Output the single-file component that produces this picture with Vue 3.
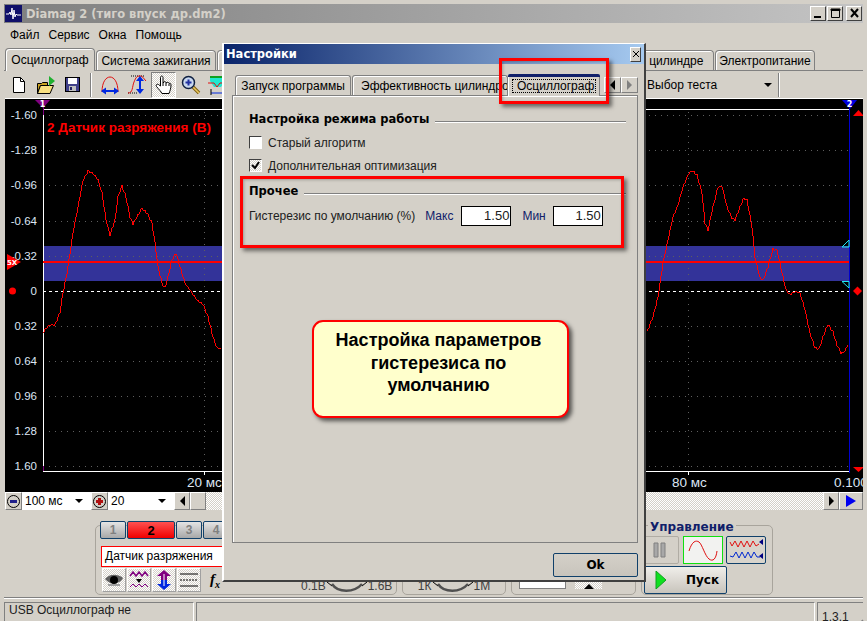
<script setup>
const menus = ['Файл', 'Сервис', 'Окна', 'Помощь']

// опорные точки кривой, снятые с экрана
const leftRaw = [[43,332],[47,327],[50,325],[55,325],[60,312],[63,293],[67,273],[70,253],[73,233],[78,207],[83,180],[88,171],[93,173],[98,180],[102,193],[106,220],[110,235],[115,220],[118,197],[122,186],[126,197],[130,217],[133,224],[137,217],[142,208],[147,213],[152,223],[155,243],[158,267],[162,283],[165,288],[168,277],[172,260],[176,253],[180,267],[185,283],[192,293],[197,300],[203,304],[208,317],[213,337],[217,348],[222,349]]
const rightRaw = [[647,332],[653,317],[658,297],[663,263],[668,240],[673,217],[678,205],[683,187],[688,175],[692,170],[697,175],[702,193],[705,223],[708,230],[713,207],[718,187],[722,186],[727,207],[732,218],[735,220],[740,207],[744,198],[747,200],[752,227],[755,257],[760,278],[763,280],[768,267],[773,249],[777,250],[782,273],[786,290],[790,295],[795,291],[800,293],[805,310],[810,333],[815,348],[819,349],[823,337],[828,324],[833,332],[837,345],[841,353],[845,351],[849,342]]

function trace(raw) {
  const out = []
  for (let i = 0; i < raw.length - 1; i++) {
    const [x1, y1] = raw[i]
    const [x2, y2] = raw[i + 1]
    for (let x = x1; x < x2; x++) {
      const y = y1 + (y2 - y1) * (x - x1) / (x2 - x1)
      out.push(x + ',' + Math.round(y + Math.sin(x * 1.9) * 0.9))
    }
  }
  return out.join(' ')
}
const leftWave = trace(leftRaw)
const rightWave = trace(rightRaw)

const scaleY = [
  { t: '-1.60', y: 115 }, { t: '-1.28', y: 150 }, { t: '-0.96', y: 185 }, { t: '-0.64', y: 221 },
  { t: '-0.32', y: 256 }, { t: '0', y: 291 }, { t: '0.32', y: 326 }, { t: '0.64', y: 361 },
  { t: '0.96', y: 396 }, { t: '1.28', y: 431 }, { t: '1.60', y: 466 }
]
const gridX = [204, 365, 526, 688]
</script>

<template>
  <div class="window">
    <div class="titlebar">
      <svg class="app-icon" width="17" height="17" viewBox="0 0 17 17">
        <rect width="17" height="17" fill="#10106a" />
        <path d="M1 9h3l1-2 1 3 1-7 1 11 1-9 1 7 1-3 1 1h4" fill="none" stroke="#fff" />
      </svg>
      <span class="title-text">Diamag 2 (тиго впуск др.dm2)</span>
      <div class="win-btns">
        <button class="win-btn"><svg width="15" height="15"><rect x="3" y="10" width="7" height="2" fill="#000" /></svg></button>
        <button class="win-btn"><svg width="15" height="15"><path d="M3.5 3.5h8v8h-8z M3 3h9v1.500H3z" fill="none" stroke="#000" /></svg></button>
        <button class="win-btn close"><svg width="15" height="15"><path d="M4 3l7 8M11 3l-7 8" stroke="#000" stroke-width="2" /></svg></button>
      </div>
    </div>

    <div class="menubar">
      <span v-for="m in menus" :key="m">{{ m }}</span>
    </div>

    <div class="tabs">
      <div class="tab active">Осциллограф</div>
      <div class="tab t-ign">Система зажигания</div>
      <div class="tab t-hid"></div>
      <div class="tab t-cyl">Давление в цилиндре</div>
      <div class="tab t-pow">Электропитание</div>
    </div>

    <div class="toolbar">
      <div class="tool">
        <svg width="14" height="16" viewBox="0 0 14 16"><path d="M1.500.5h7l4 4v11h-11z" fill="#fff" stroke="#000" /><path d="M8.500.5v4h4" fill="none" stroke="#000" /></svg>
      </div>
      <div class="tool">
        <svg width="20" height="20" viewBox="0 0 20 20">
          <path d="M1.500 8.500h4l1-1h5v3h-7l-3 8z" fill="#c8a020" stroke="#000" />
          <path d="M4.500 10.500h13l-3.500 8H1.500z" fill="#f8e080" stroke="#000" />
          <path d="M13 1l6 5-6 5z" fill="#20b030" />
        </svg>
      </div>
      <div class="tool">
        <svg width="15" height="15" viewBox="0 0 15 15">
          <rect x=".5" y=".5" width="14" height="14" fill="#40408a" stroke="#000" />
          <rect x="3" y="1" width="9" height="6" fill="#fff" />
          <rect x="4" y="9" width="7" height="5" fill="#c0c0c0" />
          <rect x="5" y="10" width="2" height="3" fill="#202060" />
        </svg>
      </div>
      <div class="tool-sep"></div>
      <div class="tool">
        <svg width="20" height="20" viewBox="0 0 20 20">
          <path d="M2 17C2 7 6 2 10 2s8 5 8 15" fill="none" stroke="#e01010" />
          <path d="M2 16h16" stroke="#0028e0" stroke-width="2" />
          <path d="M1 16l5-3.500v7zM19 16l-5-3.500v7z" fill="#0028e0" />
        </svg>
      </div>
      <div class="tool">
        <svg width="20" height="20" viewBox="0 0 20 20">
          <path d="M4 1h14M1 18h9" stroke="#000" stroke-dasharray="1 1" />
          <path d="M1 18c5 0 4-6 6-11s3-6 6-6 3 2 6 5" fill="none" stroke="#e01010" />
          <path d="M13 3v13" stroke="#0028e0" stroke-width="2" />
          <path d="M13 1l-4 5h8zM13 19l-4-5h8z" fill="#0028e0" />
        </svg>
      </div>
      <div class="tool pressed">
        <svg width="18" height="20" viewBox="0 0 18 20">
          <path d="M5.500 11V2.500c0-2 2.500-2 2.500 0V8l1-1c1-1 2 0 2 1l1-.5c1-.5 2 0 2 1 1-.5 2 0 2 1.500 0 3-1 6-2 8.500H7c-1-2-3-4-5.500-7-1-1.500.5-3 2-2z" fill="#fff" stroke="#000" />
          <path d="M8 8v3M11 8v3M14 9v2" stroke="#000" />
        </svg>
      </div>
      <div class="tool">
        <svg width="20" height="20" viewBox="0 0 20 20">
          <path d="M12 12l6 6" stroke="#806010" stroke-width="3.500" />
          <path d="M12 12l6 6" stroke="#e8c860" stroke-width="1.500" />
          <circle cx="7.500" cy="7.500" r="6" fill="#c8d8f0" stroke="#102040" stroke-width="1.500" />
          <path d="M4.500 7.500h6M7.500 4.500v6" stroke="#2030a0" stroke-width="2" />
        </svg>
      </div>
      <div class="tool">
        <svg width="19" height="20" viewBox="0 0 19 20">
          <path d="M2 1h15v5l-4 6H6L2 6z" fill="#20e8d0" />
          <path d="M2 2h15" stroke="#10a020" stroke-width="2" />
          <path d="M0 8h6l3 4 3-4h7" fill="none" stroke="#e01010" />
          <path d="M3 18h13" stroke="#0028e0" />
          <path d="M3 14v6M16 14v6" stroke="#000" />
        </svg>
      </div>
      <div class="test-combo">
        <span>Выбор теста</span>
        <i class="arrow-down"></i>
      </div>
      <div class="tool-sep end"></div>
    </div>

    <div class="scope">
      <svg class="scope-svg" width="858" height="393" viewBox="5 99 858 393">
        <rect x="43" y="246" width="806" height="35" fill="#333399" />
        <g shape-rendering="crispEdges">
          <line v-for="s in scaleY" :key="s.t" x1="43" x2="849" :y1="s.y" :y2="s.y" stroke="#5e5e5e" stroke-dasharray="1 5" />
          <line v-for="x in gridX" :key="x" :x1="x" :x2="x" y1="112" y2="471" stroke="#5e5e5e" stroke-dasharray="1 5" />
          <line x1="43" x2="849" y1="291.500" y2="291.500" stroke="#fff" stroke-dasharray="3 3" />
          <line x1="43" x2="43" y1="109" y2="471" stroke="#fff" />
          <line x1="43" x2="849" y1="109.500" y2="109.500" stroke="#fff" />
          <line x1="43" x2="849" y1="471.500" y2="471.500" stroke="#fff" />
          <line x1="43" x2="43" y1="106" y2="115" stroke="#800080" />
          <line x1="43" x2="43" y1="466" y2="471" stroke="#800080" />
          <line x1="849.500" x2="849.500" y1="106" y2="473" stroke="#0000d0" />
          <line x1="204" x2="204" y1="471" y2="475" stroke="#fff" />
          <line x1="688" x2="688" y1="471" y2="475" stroke="#fff" />
          <line x1="43" x2="849" y1="262" y2="262" stroke="#ff0000" stroke-width="1.500" />
          <polyline :points="leftWave" fill="none" stroke="#ff0000" />
          <polyline :points="rightWave" fill="none" stroke="#ff0000" />
        </g>

        <g class="ax">
          <text v-for="s in scaleY" :key="s.t" x="37" :y="s.y + 4" text-anchor="end">{{ s.t }}</text>
          <text x="187" y="487" class="ax-big">20 мс</text>
          <text x="672" y="487" class="ax-big">80 мс</text>
          <text x="834" y="487" class="ax-big">0.100</text>
        </g>
        <text x="47" y="132" class="sig-name">2 Датчик разряжения (В)</text>

        <!-- метки каналов и уровней -->
        <path d="M35 100h15l-7 8z" fill="#800080" />
        <text x="42.500" y="107" class="flag">1</text>
        <path d="M842 100h15l-7 9z" fill="#0000e0" />
        <text x="849.500" y="107" class="flag">2</text>
        <path d="M853 116l5.500-6 5.500 6z" fill="#ff0000" />
        <path d="M853 467l5.500 5 5.500-5z" fill="#ff0000" />
        <path d="M853 291l4.500-4.500 4.500 4.500-4.500 4.500z" fill="#ff0000" />
        <circle cx="12.500" cy="291" r="3.500" fill="#ff0000" />
        <path d="M7 254l14 8-14 8z" fill="#ff0000" />
        <text x="7" y="265" class="flag small">5Х</text>
        <path d="M842 247l7-7v7z" fill="none" stroke="#20e8f0" />
        <path d="M842 281.500h7v6.500z" fill="none" stroke="#20e8f0" />
      </svg>
    </div>

    <div class="scalebar">
      <button class="round-btn"><i class="sym minus"></i></button>
      <div class="combo c-time"><span>100 мс</span><i class="arrow-down"></i></div>
      <button class="round-btn"><i class="sym plus"></i></button>
      <div class="combo c-pct"><span>20</span><i class="arrow-down"></i></div>
      <button class="sq-btn"><i class="arrow-left"></i></button>
      <button class="sq-btn thumb"></button>
      <div class="track"></div>
      <button class="sq-btn"><i class="arrow-right"></i></button>
      <button class="sq-btn wide"><i class="arrow-right blue"></i></button>
    </div>

    <div class="panels">
      <div class="group g-channel">
        <div class="channel">
          <div class="ch-btns">
            <button class="ch">1</button>
            <button class="ch on">2</button>
            <button class="ch">3</button>
            <button class="ch">4</button>
          </div>
          <div class="ch-name">Датчик разряжения</div>
          <div class="ch-tools">
            <div class="ch-tool">
              <svg width="20" height="14" viewBox="0 0 20 14"><path d="M1 6c4-5 12-6 18-1-3 6-12 8-18 1z" fill="#606060" /><circle cx="10" cy="7" r="4" fill="#000" /><path d="M4 12h12" stroke="#a0a0a0" stroke-width="2" /></svg>
            </div>
            <div class="ch-tool">
              <svg width="20" height="20" viewBox="0 0 20 20"><path d="M1 6l3-4 3 4 3-4 3 4 3-4 3 4" fill="none" stroke="#800080" stroke-width="1.500" /><path d="M1 17l3-3 3 3 3-3 3 3 3-3 3 3" fill="none" stroke="#800080" /><path d="M7 9h6l-3 4z" fill="#000" /></svg>
            </div>
            <div class="ch-tool">
              <svg width="16" height="20" viewBox="0 0 16 20"><path d="M8 0l7 6h-4v4H5V6H1z" fill="#800080" /><path d="M8 20l7-6h-4v-4H5v4H1z" fill="#0028e0" /><path d="M8 4v12" stroke="#fff" /></svg>
            </div>
            <div class="ch-tool">
              <svg width="20" height="16" viewBox="0 0 20 16"><path d="M1 2h18M1 14h18" stroke="#000" /><path d="M1 8h18" stroke="#000" stroke-dasharray="2 1" /></svg>
            </div>
            <span class="fx"><i>f</i><sub>x</sub></span>
          </div>
        </div>
        <div class="knob k-volt">
          <span>0.1В</span>
          <svg width="42" height="13" viewBox="0 0 42 13"><path d="M1 2l5 4M41 2l-5 4" stroke="#000" /><path d="M6 4c6 9 22 9 30 0" fill="none" stroke="#505050" stroke-width="2.500" /></svg>
          <span>1.6В</span>
        </div>
      </div>
      <div class="group g-freq">
        <div class="knob">
          <span>1К</span>
          <svg width="42" height="13" viewBox="0 0 42 13"><path d="M1 2l5 4M41 2l-5 4" stroke="#000" /><path d="M6 4c6 9 22 9 30 0" fill="none" stroke="#505050" stroke-width="2.500" /></svg>
          <span>1М</span>
        </div>
      </div>
      <div class="group g-num">
        <div class="num-box"></div>
        <div class="spin"><i class="arrow-up"></i></div>
      </div>
      <div class="group g-ctrl">
        <div class="legend">Управление</div>
        <div class="ctrl-row">
          <button class="btn-pause">
            <svg width="14" height="16" viewBox="0 0 14 16"><path d="M1 1h4v14H1zM8 1h4v14H8z" fill="#a8a8a8" stroke="#808080" /></svg>
          </button>
          <button class="btn-sine">
            <svg width="30" height="22" viewBox="0 0 30 22"><path d="M1 12C4 2 8 1 11 3s6 14 10 17 7 0 8-8" fill="none" stroke="#e01010" /></svg>
          </button>
          <button class="btn-wave">
            <svg width="34" height="22" viewBox="0 0 34 22">
              <path d="M1 3l2 4 3-5 3 6 3-6 3 6 3-6 3 6 3-6 3 5 3-2" fill="none" stroke="#e01010" />
              <path d="M1 17l3 1 3-5 3 6 3-6 3 6 3-6 3 6 3-6 3 5h3" fill="none" stroke="#0028d0" />
              <path d="M34 0v6l-4-3zM34 14v6l-4-3z" fill="#000080" />
            </svg>
          </button>
        </div>
        <button class="btn-start">
          <svg width="12" height="18" viewBox="0 0 12 18"><path d="M1 0l10 9-10 9z" fill="#10e020" stroke="#10a020" /></svg>
          <span>Пуск</span>
        </button>
      </div>
    </div>

    <div class="statusbar">
      <div class="st s1">USB Осциллограф не подключен</div>
      <div class="st s2"></div>
      <div class="st s3">1.3.1
        <svg class="grip" width="12" height="12" viewBox="0 0 12 12"><path d="M11 1L1 11M11 5l-6 6M11 9l-2 2" stroke="#808080" stroke-width="1.500" /></svg>
      </div>
    </div>

    <!-- окно настроек поверх программы -->
    <div class="dialog">
      <div class="dlg-title">
        <span>Настройки</span>
        <button class="dlg-close"><svg width="8" height="8"><path d="M1 1l6 6M7 1L1 7" stroke="#000" /></svg></button>
      </div>
      <div class="dlg-tabs">
        <div class="dtab d1">Запуск программы</div>
        <div class="dtab d2">Эффективность цилиндров</div>
        <div class="dtab d3"><span class="focus">Осциллограф</span></div>
        <div class="dnav">
          <button><i class="arrow-left"></i></button>
          <button><i class="arrow-right gray"></i></button>
        </div>
      </div>
      <div class="dlg-page">
        <div class="sec"><b>Настройка режима работы</b><i class="rule"></i></div>
        <label class="chk first"><span class="box"></span>Старый алгоритм</label>
        <label class="chk"><span class="box dith"><svg width="9" height="9" viewBox="0 0 9 9"><path d="M1 4l3 3 4-6" fill="none" stroke="#000" stroke-width="2" /></svg></span>Дополнительная оптимизация</label>
        <div class="sec second"><b>Прочее</b><i class="rule"></i></div>
        <div class="hyst">
          <span>Гистерезис по умолчанию (%)</span>
          <span class="navy m-max">Макс</span>
          <div class="val">1.50</div>
          <span class="navy m-min">Мин</span>
          <div class="val">1.50</div>
        </div>
      </div>
      <div class="dlg-foot"><button class="ok">Ok</button></div>
    </div>

    <div class="mark mark-tab"></div>
    <div class="mark mark-hyst"></div>
    <div class="callout">Настройка параметров<br />гистерезиса по<br />умолчанию</div>
  </div>
</template>

<style>
html, body { margin: 0; background: #d4d0c8; }
</style>

<style scoped>
* { box-sizing: border-box; }
button { font: inherit; padding: 0; margin: 0; }
.window {
  position: relative;
  width: 867px;
  height: 621px;
  overflow: hidden;
  padding: 4px;
  background: #d4d0c8;
  font: 12px "Liberation Sans", Arial, sans-serif;
  color: #000;
  display: flex;
  flex-direction: column;
}
.titlebar {
  height: 19px;
  flex: none;
  display: flex;
  align-items: center;
  background: linear-gradient(90deg, #7f7f7f, #c4c4c4);
  padding-left: 1px;
}
.title-text {
  font: bold 11.500px "DejaVu Sans", sans-serif;
  color: #d4d0c8;
  margin-left: 4px;
}
.win-btns { margin-left: auto; display: flex; gap: 1px; margin-right: 1px; }
.win-btn {
  width: 16px;
  height: 15px;
  background: #d4d0c8;
  border: 1px solid;
  border-color: #fff #404040 #404040 #fff;
  display: flex;
  align-items: center;
  justify-content: center;
  overflow: hidden;
}
.win-btn.close { margin-left: 2px; }
.menubar {
  height: 24px;
  flex: none;
  display: flex;
  gap: 9px;
  align-items: center;
  padding-left: 6px;
}
.tabs {
  height: 24px;
  flex: none;
  display: flex;
  align-items: flex-end;
  padding-left: 1px;
  border-bottom: 1px solid #808080;
}
.tab {
  height: 20px;
  border: 1px solid #808080;
  border-bottom: none;
  border-radius: 4px 4px 0 0;
  display: flex;
  align-items: center;
  justify-content: center;
  margin-left: 1px;
  box-shadow: inset 1px 1px 0 #fff;
  white-space: nowrap;
}
.tab.active { width: 90px; height: 23px; margin: 0 0 -1px; background: #d4d0c8; position: relative; }
.t-ign { width: 120px; }
.t-hid { width: 353px; }
.t-cyl { width: 143px; }
.t-pow { width: 100px; }
.toolbar {
  height: 27px;
  flex: none;
  display: flex;
  align-items: center;
  padding-left: 1px;
}
.tool {
  width: 27px;
  height: 26px;
  flex: none;
  display: flex;
  align-items: center;
  justify-content: center;
}
.tool.pressed {
  width: 25px;
  margin: 0 1px;
  background: repeating-conic-gradient(#d4d0c8 0 25%, #fff 0 50%) 0 0 / 2px 2px;
  border: 1px solid;
  border-color: #808080 #fff #fff #808080;
}
.tool-sep {
  width: 2px;
  height: 24px;
  flex: none;
  margin: 0 4px;
  border-left: 1px solid #808080;
  border-right: 1px solid #fff;
}
.test-combo {
  margin-left: 416px;
  width: 128px;
  flex: none;
  display: flex;
  justify-content: space-between;
  align-items: center;
}
.test-combo span { font-size: 12px; }
.test-combo .arrow-down { margin-right: 3px; }
.tool-sep.end { margin: 0 0 0 3px; }
.arrow-down { width: 0; height: 0; border: 4px solid transparent; border-top-color: #000; border-bottom: none; display: block; }
.arrow-up { width: 0; height: 0; border: 5px solid transparent; border-bottom-color: #000; border-top: none; display: block; }
.arrow-left { width: 0; height: 0; border: 5px solid transparent; border-right-color: #000; border-left: none; display: block; }
.arrow-right { width: 0; height: 0; border: 5px solid transparent; border-left-color: #000; border-right: none; display: block; }
.arrow-right.gray { border-left-color: #808080; }
.arrow-right.blue { border-width: 6px 0 6px 10px; border-left-color: #0000f0; }

.scope {
  height: 394px;
  flex: none;
  margin-left: 1px;
  background: #000;
  border-top: 1px solid #fff;
  overflow: hidden;
}
.scope-svg { display: block; }
.ax text { font: 11.500px "Liberation Sans", sans-serif; fill: #dde6f4; }
.ax text.ax-big { font-size: 13.500px; }
.sig-name { font: bold 13.500px "Liberation Sans", sans-serif; fill: #ff0000; }
.flag { font: bold 8px "DejaVu Sans", sans-serif; fill: #fff; text-anchor: middle; }
.flag.small { font-size: 7px; text-anchor: start; }

.scalebar {
  height: 18px;
  flex: none;
  margin-left: 1px;
  display: flex;
  background: #fff;
}
.round-btn {
  width: 17px;
  flex: none;
  background: #d4d0c8;
  border: 1px solid;
  border-color: #fff #808080 #808080 #fff;
  display: flex;
  align-items: center;
  justify-content: center;
}
.sym {
  width: 13px;
  height: 13px;
  border-radius: 50%;
  border: 1px solid #000;
  position: relative;
  display: block;
}
.sym::before { content: ""; position: absolute; left: 2px; right: 2px; top: 4px; height: 3px; background: #20208a; }
.sym.plus::before { background: #b01010; }
.sym.plus::after { content: ""; position: absolute; top: 2px; bottom: 2px; left: 4px; width: 3px; background: #b01010; }
.combo {
  display: flex;
  align-items: center;
  justify-content: space-between;
  background: #fff;
  padding: 0 8px 0 3px;
  font-size: 12px;
  flex: none;
}
.c-time { width: 69px; }
.c-pct { width: 66px; }
.sq-btn {
  width: 16px;
  flex: none;
  background: #d4d0c8;
  border: 1px solid;
  border-color: #fff #808080 #808080 #fff;
  display: flex;
  align-items: center;
  justify-content: center;
}
.sq-btn.wide { width: 24px; }
.track {
  flex: 1;
  background: repeating-conic-gradient(#d4d0c8 0 25%, #fff 0 50%) 0 0 / 2px 2px;
}

.panels {
  height: 88px;
  flex: none;
  display: flex;
  gap: 5px;
  padding: 15px 0 2px 91px;
  border-bottom: 1px solid #808080;
}
.group {
  border: 1px solid #a8a49c;
  border-radius: 5px;
  flex: none;
  display: flex;
}
.g-channel { width: 302px; padding-left: 4px; }
.g-freq { width: 104px; align-items: flex-end; justify-content: center; }
.g-num { width: 125px; align-items: flex-end; padding: 0 0 5px 7px; gap: 9px; }
.g-ctrl { width: 132px; flex-direction: column; padding-left: 2px; }
.channel { flex: none; display: flex; flex-direction: column; }
.ch-btns { display: flex; gap: 1px; margin-top: -5px; }
.ch {
  width: 26px;
  height: 18px;
  border: 1px solid #10406a;
  border-radius: 2px;
  background: linear-gradient(#e4e4e4, #a8a8a8);
  color: #808080;
  font-weight: bold;
}
.ch.on {
  width: 48px;
  background: linear-gradient(#ff5050, #f00000);
  color: #000;
  font-size: 13px;
}
.ch-name {
  width: 200px;
  height: 21px;
  margin: 7px 0 0 1px;
  background: #fff;
  border: 1px solid #ff0000;
  padding-left: 3px;
  line-height: 19px;
}
.ch-tools { display: flex; gap: 1px; margin: 1px 0 0 2px; align-items: center; }
.ch-tool {
  width: 24px;
  height: 24px;
  display: flex;
  align-items: center;
  justify-content: center;
  background: repeating-conic-gradient(#d4d0c8 0 25%, #fff 0 50%) 0 0 / 2px 2px;
  border: 1px solid;
  border-color: #fff #a0a0a0 #a0a0a0 #fff;
}
.fx { font: italic bold 14px "Liberation Serif", serif; margin-left: 8px; }
.fx i { font-size: 15px; }
.fx sub { font-size: 10px; }
.knob {
  display: flex;
  align-items: flex-end;
  gap: 0;
  font-size: 12px;
  color: #404040;
  line-height: 14px;
  padding-bottom: 1px;
}
.k-volt { margin-left: auto; margin-top: auto; margin-right: 6px; align-self: flex-end; }
.num-box { width: 47px; height: 10px; background: #fff; border: 1px solid #808080; }
.spin {
  width: 27px;
  height: 11px;
  background: repeating-conic-gradient(#d4d0c8 0 25%, #fff 0 50%) 0 0 / 2px 2px;
  display: flex;
  justify-content: center;
  align-items: flex-end;
}
.legend {
  height: 15px;
  margin: -5px 0 0 4px;
  font: bold 12px "DejaVu Sans", sans-serif;
  color: #10206a;
  background: #d4d0c8;
  align-self: flex-start;
  padding: 0 2px;
  line-height: 13px;
}
.ctrl-row { display: flex; height: 28px; }
.ctrl-row button { display: flex; align-items: center; justify-content: center; }
.btn-pause {
  width: 39px;
  margin-left: -4px;
  background: #d4d0c8;
  border: 1px solid #b0aca4;
  border-radius: 2px;
}
.btn-sine {
  width: 40px;
  margin-left: 4px;
  background: #f2f2f0;
  border: 1px solid #10e010;
}
.btn-wave {
  width: 40px;
  margin-left: 3px;
  background: #d8d4cc;
  border: 1px solid #10406a;
  border-radius: 2px;
}
.btn-start {
  width: 83px;
  height: 28px;
  margin: 2px 0 0 0;
  background: linear-gradient(#f0eeea, #c8c4bc);
  border: 1px solid #10406a;
  border-radius: 2px;
  display: flex;
  align-items: center;
  padding-left: 10px;
  font: bold 12px "DejaVu Sans", sans-serif;
}
.btn-start span { margin-left: 19px; }

.statusbar {
  flex: 1;
  display: flex;
  gap: 2px;
  padding-top: 3px;
  border-top: 1px solid #fff;
  font-size: 12px;
  padding-bottom: 1px;
}
.st {
  border: 1px solid;
  border-color: #808080 #fff #fff #808080;
  display: flex;
  align-items: center;
  padding-left: 4px;
  color: #202020;
}
.s1 { width: 190px; }
.s2 { width: 619px; }
.s3 { flex: 1; position: relative; border-right: none; }
.grip { position: absolute; right: -1px; bottom: 0; }

.dialog {
  position: absolute;
  left: 222px;
  top: 43px;
  width: 424px;
  height: 539px;
  background: #d4d0c8;
  border-style: solid;
  border-width: 1px 2px 2px 2px;
  border-color: #fff #404040 #404040 #fff;
  display: flex;
  flex-direction: column;
}
.dlg-title {
  height: 20px;
  flex: none;
  background: linear-gradient(90deg, #0a246a, #a6caf0);
  color: #fff;
  font: bold 11.500px "DejaVu Sans", sans-serif;
  display: flex;
  align-items: center;
  justify-content: space-between;
  padding: 0 3px 0 2px;
}
.dlg-close {
  width: 11px;
  height: 15px;
  background: #d4d0c8;
  border: 1px solid;
  border-color: #fff #404040 #404040 #fff;
  display: flex;
  align-items: center;
  justify-content: center;
}
.dlg-tabs {
  height: 11px;
  flex: none;
  display: flex;
  align-items: flex-end;
  padding-left: 11px;
  height: 31px;
}
.dtab {
  height: 20px;
  border: 1px solid #808080;
  border-bottom: none;
  border-radius: 3px 3px 0 0;
  box-shadow: inset 1px 1px 0 #fff;
  display: flex;
  align-items: center;
  white-space: nowrap;
  overflow: hidden;
  flex: none;
}
.d1 { width: 116px; justify-content: center; margin-right: 1px; }
.d2 { width: 156px; padding-left: 8px; }
.d3 {
  width: 92px;
  height: 22px;
  margin-bottom: -1px;
  background: #d4d0c8;
  position: relative;
  border: none;
  border-top: 3px solid #10206a;
  justify-content: center;
  box-shadow: inset 1px 0 0 #fff, inset -1px 0 0 #808080;
  border-radius: 2px 2px 0 0;
  padding-bottom: 1px;
}
.focus { border: 1px dotted #000; padding: 0 4px; width: 84px; height: 14px; line-height: 12px; text-align: center; }
.dnav { display: flex; margin: 0 0 2px 4px; }
.dnav button {
  width: 17px;
  height: 16px;
  background: #d4d0c8;
  border: 1px solid;
  border-color: #fff #808080 #808080 #fff;
  display: flex;
  align-items: center;
  justify-content: center;
}
.dlg-page {
  width: 406px;
  height: 448px;
  margin-left: 8px;
  flex: none;
  border: 1px solid #808080;
  box-shadow: inset 1px 1px 0 #fff;
  padding: 16px 11px 0 16px;
  display: flex;
  flex-direction: column;
}
.sec {
  display: flex;
  align-items: center;
  height: 14px;
  font: 11.500px "DejaVu Sans", sans-serif;
}
.sec b { white-space: nowrap; }
.sec.second { margin-top: 12px; }
.rule {
  flex: 1;
  height: 2px;
  margin: 5px 0 0 6px;
  border-top: 1px solid #808080;
  border-bottom: 1px solid #fff;
}
.chk { display: flex; align-items: center; height: 13px; margin-top: 10px; color: #202020; }
.chk.first { margin-top: 10px; }
.box {
  width: 13px;
  height: 13px;
  margin-right: 6px;
  background: #fff;
  border: 1px solid;
  border-color: #404040 #fff #fff #404040;
  display: flex;
  align-items: center;
  justify-content: center;
}
.box.dith { background: repeating-conic-gradient(#d4d0c8 0 25%, #fff 0 50%) 0 0 / 2px 2px; }
.hyst { display: flex; align-items: center; margin-top: 8px; height: 20px; color: #202020; }
.navy { color: #10206a; }
.m-max { margin: 0 8px 0 10px; }
.m-min { margin: 0 7px 0 11px; }
.val {
  width: 50px;
  height: 20px;
  background: #fff;
  border: 1px solid #000;
  text-align: right;
  padding-right: 1px;
  line-height: 18px;
  font-size: 13px;
}
.dlg-foot { display: flex; justify-content: flex-end; padding: 10px 6px 0 0; }
.ok {
  width: 85px;
  height: 24px;
  background: linear-gradient(#d4d0c8, #c8c4bc);
  border: 1px solid #10406a;
  border-radius: 2px;
  font: bold 12px "DejaVu Sans", sans-serif;
}

.mark {
  position: absolute;
  border: 3px solid #ff0000;
  box-shadow: 3px 3px 4px rgba(0, 0, 0, 0.5), inset 1px 1px 3px rgba(0, 0, 0, 0.25);
}
.mark-tab { left: 499px; top: 58px; width: 110px; height: 46px; }
.mark-hyst { left: 240px; top: 176px; width: 384px; height: 72px; }
.callout {
  position: absolute;
  left: 312px;
  top: 320px;
  width: 257px;
  height: 98px;
  background: #ffffcc;
  border: 2px solid #ff0000;
  border-radius: 11px;
  box-shadow: 3px 3px 4px rgba(0, 0, 0, 0.6);
  font: bold 18px/22.500px "Liberation Sans", sans-serif;
  text-align: center;
  padding: 7px 4px 0 0;
}
</style>
